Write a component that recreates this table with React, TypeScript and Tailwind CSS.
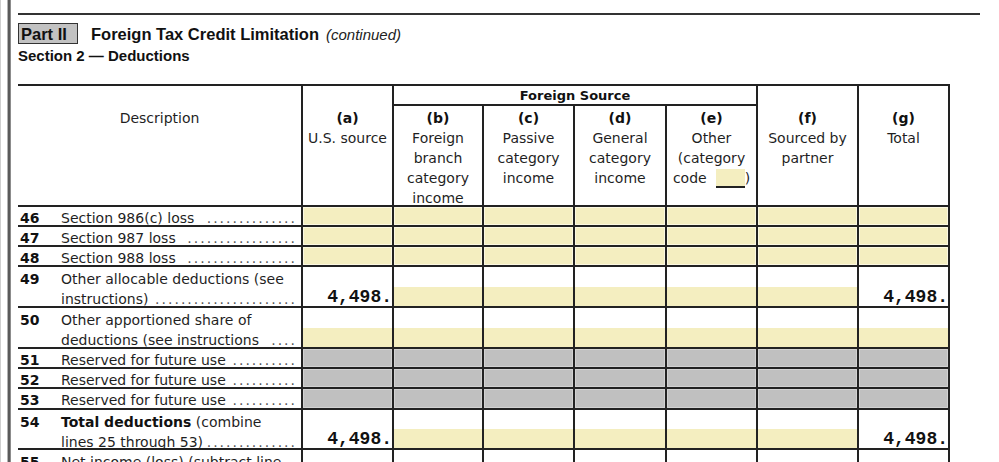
import React from 'react';

type CellT = 'y' | 'g' | 'w' | 'yb' | 'v';

const YEL = 'bg-[#f4eec0] shadow-[inset_0_0_0_1px_#fbf8e2]';
const GRY = 'bg-[#c0c0c0] shadow-[inset_0_0_0_1px_#d2d2d2]';

function Value({ t }: { t: CellT }) {
  if (t === 'y') return <div className={YEL} />;
  if (t === 'g') return <div className={GRY} />;
  if (t === 'w') return <div className="bg-white" />;
  if (t === 'yb')
    return (
      <div className="bg-white flex flex-col justify-end">
        <div className="h-[19px] bg-[#f4eec0]" />
      </div>
    );
  return (
    <div className="bg-white flex items-end justify-end">
      <span className="font-['Liberation_Mono',monospace] font-bold text-[18px] leading-[15px] pb-[1px] text-[#111]">
        4,498.
      </span>
    </div>
  );
}

type Row = {
  num: string;
  first?: React.ReactNode;
  last: React.ReactNode;
  dots: number;
  cells: CellT[];
};

const seven = (t: CellT): CellT[] => [t, t, t, t, t, t, t];

const rows: Row[] = [
  { num: '46', last: 'Section 986(c) loss', dots: 14, cells: seven('y') },
  { num: '47', last: 'Section 987 loss', dots: 17, cells: seven('y') },
  { num: '48', last: 'Section 988 loss', dots: 17, cells: seven('y') },
  {
    num: '49',
    first: 'Other allocable deductions (see',
    last: 'instructions)',
    dots: 22,
    cells: ['v', 'yb', 'yb', 'yb', 'yb', 'yb', 'v'],
  },
  {
    num: '50',
    first: 'Other apportioned share of',
    last: 'deductions (see instructions',
    dots: 4,
    cells: seven('yb'),
  },
  { num: '51', last: 'Reserved for future use', dots: 10, cells: seven('g') },
  { num: '52', last: 'Reserved for future use', dots: 10, cells: seven('g') },
  { num: '53', last: 'Reserved for future use', dots: 10, cells: seven('g') },
  {
    num: '54',
    first: (
      <>
        <span className="font-bold text-[#111]">Total deductions</span> (combine
      </>
    ),
    last: 'lines 25 through 53)',
    dots: 14,
    cells: ['v', 'yb', 'yb', 'yb', 'yb', 'yb', 'v'],
  },
  {
    num: '55',
    first: 'Net income (loss) (subtract line',
    last: '',
    dots: 0,
    cells: seven('w'),
  },
];

function Desc({ r }: { r: Row }) {
  const double = r.first !== undefined;
  return (
    <div
      className={`bg-white flex pl-[2px] pr-[4px] text-[14px] text-[#1f1f1f] ${
        double ? 'pt-[2px] leading-[20px]' : 'pt-[3px] leading-[16px]'
      }`}
    >
      <span className="w-[41px] shrink-0 font-bold text-[#111]">{r.num}</span>
      <div className="flex-1 min-w-0 flex flex-col">
        {double && <div className="whitespace-nowrap">{r.first}</div>}
        {r.dots > 0 && (
          <div className="flex justify-between gap-[2px] whitespace-nowrap">
            <span>{r.last}</span>
            <span className="tracking-[2px] text-[#555]">{'.'.repeat(r.dots)}</span>
          </div>
        )}
      </div>
    </div>
  );
}

function Head({ letter, lines, span }: { letter: string; lines: React.ReactNode[]; span?: boolean }) {
  return (
    <div
      className={`bg-white text-center text-[14px] leading-[20px] text-[#1f1f1f] ${
        span ? 'row-span-2 pt-[22px]' : 'pt-[2px]'
      }`}
    >
      <div className="font-bold text-[#111]">{letter}</div>
      {lines.map((l, i) => (
        <div key={i} className="whitespace-nowrap">
          {l}
        </div>
      ))}
    </div>
  );
}

export default function App() {
  return (
    <div className="w-[999px] h-[462px] overflow-hidden bg-white flex font-['DejaVu_Sans',sans-serif]">
      <div className="w-px shrink-0 bg-[#cfcfcf]" />
      <div className="w-[6px] shrink-0" />
      <div className="w-[4px] shrink-0 border-l border-r border-l-[#b3b3b3] border-r-[#8c8c8c] bg-[#5a5a5a]" />
      <div className="w-[7px] shrink-0" />
      <div className="flex flex-col">
        <div className="pt-[13px]">
          <div className="w-[962px] h-[2px] bg-[#333]" />
        </div>
        <div className="mt-[8px] flex items-start h-[21px] font-['Liberation_Sans',Arial,sans-serif] text-[#111]">
          <div className="w-[60px] h-[21px] border border-[#333] bg-[#c2c2c2] pl-[2px] pt-[1px] text-[16.5px] font-bold leading-[18px]">
            Part II
          </div>
          <span className="ml-[13px] pt-[2px] text-[16.5px] font-bold leading-[19px]">
            Foreign Tax Credit Limitation
          </span>
          <span className="ml-[7px] pt-[2px] text-[15px] italic leading-[19px] text-[#222]">(continued)</span>
        </div>
        <div className="mt-[3px] h-[18px] leading-[18px] text-[15px] font-bold font-['Liberation_Sans',Arial,sans-serif] text-[#111]">
          Section 2 — Deductions
        </div>
        <div className="mt-[19px] w-[932px] grid grid-cols-[283px_89px_88px_89px_90px_89px_99px_89px] grid-rows-[18px_99px_18px_18px_18px_39px_39px_18px_18px_19px_38px_40px] gap-[2px] pt-[2px] pr-[2px] bg-[#222]">
          <div className="row-span-2 bg-white text-center text-[14px] leading-[20px] pt-[22px] text-[#1f1f1f]">
            Description
          </div>
          <Head letter="(a)" lines={['U.S. source']} span />
          <div className="col-span-4 bg-white text-center font-bold text-[13px] leading-[18px] pt-[1px] text-[#111]">
            Foreign Source
          </div>
          <Head letter="(f)" lines={['Sourced by', 'partner']} span />
          <Head letter="(g)" lines={['Total']} span />
          <Head letter="(b)" lines={['Foreign', 'branch', 'category', 'income']} />
          <Head letter="(c)" lines={['Passive', 'category', 'income']} />
          <Head letter="(d)" lines={['General', 'category', 'income']} />
          <Head
            letter="(e)"
            lines={[
              'Other',
              '(category',
              <span className="inline-flex items-end">
                code
                <span className="inline-block ml-[9px] w-[29px] h-[19px] bg-[#f4eec0] border-b-[2px] border-[#222]" />
                <span>)</span>
              </span>,
            ]}
          />
          {rows.map((r) => (
            <React.Fragment key={r.num}>
              <Desc r={r} />
              {r.cells.map((c, i) => (
                <Value key={i} t={c} />
              ))}
            </React.Fragment>
          ))}
        </div>
      </div>
    </div>
  );
}
